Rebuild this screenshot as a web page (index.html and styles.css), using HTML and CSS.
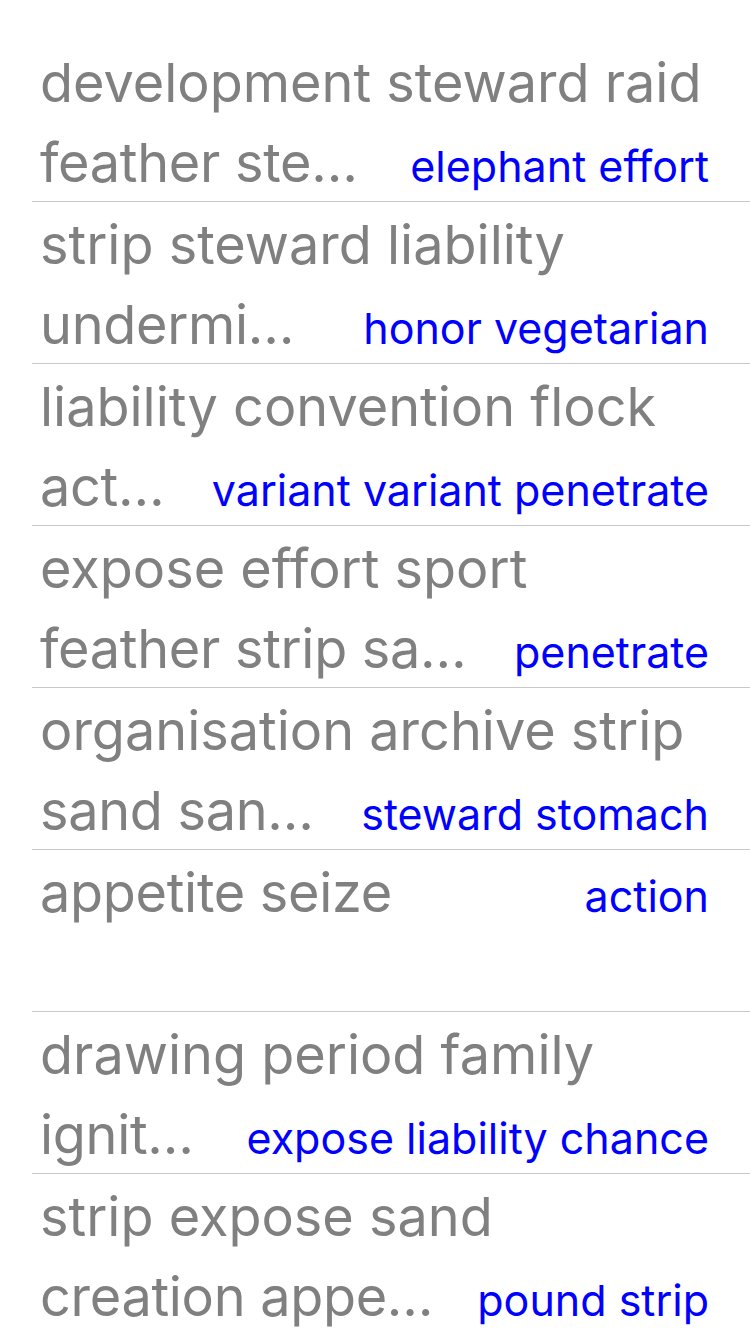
FILE: index.html
```html
<!DOCTYPE html>
<html>
<head>
<meta charset="utf-8">
<link rel="stylesheet" href="styles.css">
</head>
<body>
<div class="list">
  <div class="row">
    <div class="line">development steward raid</div>
    <div class="line last"><span class="title">feather ste…</span><span class="detail">elephant effort</span></div>
  </div>
  <div class="row">
    <div class="line">strip steward liability</div>
    <div class="line last"><span class="title">undermi…</span><span class="detail">honor vegetarian</span></div>
  </div>
  <div class="row">
    <div class="line">liability convention flock</div>
    <div class="line last"><span class="title">act…</span><span class="detail">variant variant penetrate</span></div>
  </div>
  <div class="row">
    <div class="line">expose effort sport</div>
    <div class="line last"><span class="title">feather strip sa…</span><span class="detail">penetrate</span></div>
  </div>
  <div class="row">
    <div class="line">organisation archive strip</div>
    <div class="line last"><span class="title">sand san…</span><span class="detail">steward stomach</span></div>
  </div>
  <div class="row">
    <div class="line last"><span class="title">appetite seize</span><span class="detail">action</span></div>
  </div>
  <div class="row">
    <div class="line">drawing period family</div>
    <div class="line last"><span class="title">ignit…</span><span class="detail">expose liability chance</span></div>
  </div>
  <div class="row">
    <div class="line">strip expose sand</div>
    <div class="line last"><span class="title">creation appe…</span><span class="detail">pound strip</span></div>
  </div>
</div>
</body>
</html>
```
FILE: styles.css
```css
html, body {
  margin: 0;
  padding: 0;
  background: #ffffff;
}
body {
  font-family: Inter, "Liberation Sans", sans-serif;
  width: 750px;
  height: 1334px;
  overflow: hidden;
}
.list {
  padding-top: 40px;
}
.row {
  margin-left: 32px;
  height: 158px;
  border-bottom: 1px solid #c8c7cc;
  padding: 3px 41px 0 8px;
}
.line {
  font-size: 54px;
  line-height: 80px;
  color: #808080;
  white-space: nowrap;
}
.title {
  letter-spacing: -0.3px;
}
.last {
  display: flex;
  justify-content: space-between;
  align-items: baseline;
  gap: 20px;
}
.detail {
  font-size: 43px;
  color: #0000ff;
}
```
